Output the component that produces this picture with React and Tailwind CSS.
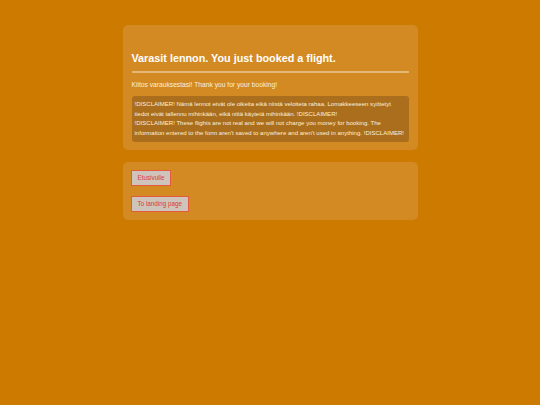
export default function App() {
  return (
    <div className="min-h-[405px] w-full bg-[#cc7a00] pt-[25px] font-['Liberation_Sans',Arial,sans-serif]">
      <div className="mx-auto flex w-[295px] flex-col gap-3">
        <div className="rounded-[5px] bg-[#d38a22] px-[9px] pt-[27px] pb-[8px]">
          <h1 className="text-[10.8px] font-bold leading-[13px] text-white">
            Varasit lennon. You just booked a flight.
          </h1>
          <hr className="mt-[6px] border-t-2 border-[#e2b877]" />
          <p className="mt-[7px] text-[6.7px] leading-[9px] text-[#fbeedb]">
            Kiitos varauksestasi! Thank you for your booking!
          </p>
          <div className="mt-[7px] whitespace-nowrap rounded-[3px] bg-[#ab6e1c] px-[3px] py-[4px] text-[6.05px] leading-[9.5px] text-[#fbeedb]">
            <p>
              !DISCLAIMER! Nämä lennot eivät ole oikeita eikä niistä veloiteta rahaa. Lomakkeeseen syötetyt
              <br />
              tiedot eivät tallennu mihinkään, eikä niitä käytetä mihinkään. !DISCLAIMER!
            </p>
            <p>
              !DISCLAIMER! These flights are not real and we will not charge you money for booking. The
              <br />
              information entered to the form aren't saved to anywhere and aren't used in anything. !DISCLAIMER!
            </p>
          </div>
        </div>
        <div className="flex flex-col items-start gap-[10px] rounded-[5px] bg-[#d38a22] px-[8px] pt-[8px] pb-[8px]">
          <button className="h-[16px] border border-[#e35a3c] bg-[#cfc4bb] px-[6px] text-[6.3px] text-[#dc3a30]">
            Etusivulle
          </button>
          <button className="h-[16px] border border-[#e35a3c] bg-[#cfc4bb] px-[6px] text-[6.3px] text-[#dc3a30]">
            To landing page
          </button>
        </div>
      </div>
    </div>
  );
}
